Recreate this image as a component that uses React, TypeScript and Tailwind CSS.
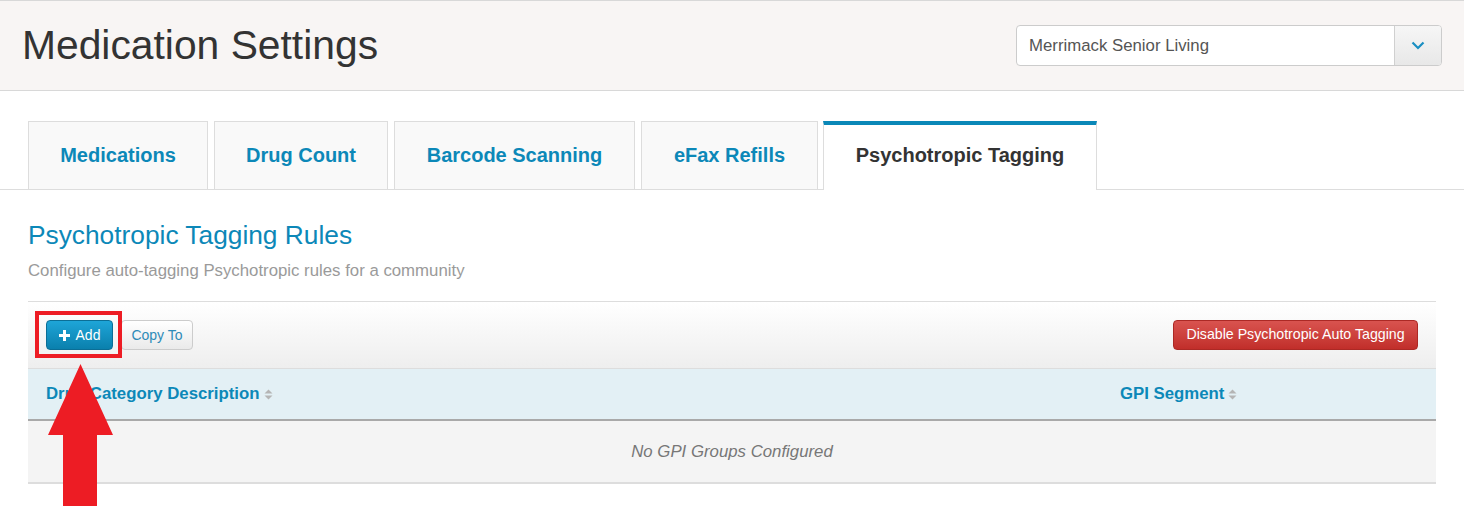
import React from "react";

const SortIcon = () => (
  <svg width="9" height="11" viewBox="0 0 9 11" className="ml-[4px] inline-block">
    <path d="M4.5 0.5 L8.5 4.5 L0.5 4.5 Z" fill="#b5b5b5" />
    <path d="M4.5 10.5 L8.5 6.5 L0.5 6.5 Z" fill="#b5b5b5" />
  </svg>
);

const tabs = [
  { label: "Medications", w: "w-[180px] mr-[6px]" },
  { label: "Drug Count", w: "w-[174px] mr-[6px]" },
  { label: "Barcode Scanning", w: "w-[241px] mr-[6px]" },
  { label: "eFax Refills", w: "w-[177px] mr-[5px]" },
];

export default function App() {
  return (
    <div className="relative w-[1464px] h-[515px] bg-white font-['Liberation_Sans',Arial,sans-serif] overflow-hidden">
      {/* Header */}
      <div className="h-[91px] border-y border-[#d8d8d8] bg-[#f8f5f4] flex items-center justify-between pl-[22px] pr-[22px]">
        <h1 className="text-[40.8px] leading-none text-[#333333] font-normal">Medication Settings</h1>
        <div className="w-[426px] h-[41px] flex border border-[#cccccc] rounded-[4px] bg-white overflow-hidden">
          <div className="flex-1 flex items-center pl-[12px] text-[16.8px] text-[#555555]">Merrimack Senior Living</div>
          <div className="w-[47px] border-l border-[#d0d0d0] bg-linear-to-b from-[#f6f6f6] to-[#e8e8e8] flex items-center justify-center">
            <svg width="14" height="9" viewBox="0 0 14 9">
              <path d="M1.5 1.5 L7 7 L12.5 1.5" fill="none" stroke="#1a8fc2" strokeWidth="2.2" />
            </svg>
          </div>
        </div>
      </div>

      {/* Tabs */}
      <div className="pt-[30px]">
        <div className="flex items-end border-b border-[#dddddd] pl-[28px] h-[69px]">
          {tabs.map((t) => (
            <div
              key={t.label}
              className={`${t.w} h-[68px] border-t border-x border-[#dddddd] bg-[#f9f9f9] flex items-center justify-center text-[20px] font-bold text-[#0c88b8] pb-[2px]`}
            >
              {t.label}
            </div>
          ))}
          <div className="w-[274px] h-[69px] -mb-px border-t-4 border-t-[#0a88b8] border-x border-x-[#dddddd] bg-white flex items-center justify-center text-[20px] font-bold text-[#333333] pb-[5px]">
            Psychotropic Tagging
          </div>
        </div>
      </div>

      {/* Section */}
      <div className="px-[28px] pt-[30px]">
        <h2 className="text-[26.3px] leading-[30px] text-[#0c88b8] font-normal">Psychotropic Tagging Rules</h2>
        <p className="mt-[11px] text-[16.8px] leading-[20px] text-[#9a9a9a]">
          Configure auto-tagging Psychotropic rules for a community
        </p>

        {/* Toolbar */}
        <div className="mt-[20px] border-t border-[#dddddd] h-[67px] bg-linear-to-b from-white to-[#eeeeee] flex items-start justify-between pt-[18px] pl-[18px] pr-[18px]">
          <div className="flex gap-[8px]">
            <button className="w-[67px] h-[30px] rounded-[4px] border border-[#0b6e96] bg-linear-to-b from-[#1ea5d8] to-[#0a80ad] text-white text-[14px] flex items-center justify-center gap-[6px]">
              <svg width="11" height="11" viewBox="0 0 11 11">
                <path d="M4 0 H7 V4 H11 V7 H7 V11 H4 V7 H0 V4 H4 Z" fill="white" />
              </svg>
              <span>Add</span>
            </button>
            <button className="w-[72px] h-[30px] rounded-[4px] border border-[#cccccc] bg-linear-to-b from-white to-[#eaeaea] text-[#2e8bb8] text-[14px] flex items-center justify-center">
              Copy To
            </button>
          </div>
          <button className="w-[245px] h-[30px] rounded-[4px] border border-[#ac2925] bg-linear-to-b from-[#d9534f] to-[#c12e2a] text-white text-[14.2px] flex items-center justify-center">
            Disable Psychotropic Auto Tagging
          </button>
        </div>

        {/* Table */}
        <div className="border-t border-[#dddddd]">
          <div className="grid grid-cols-[1074px_1fr] h-[52px] bg-[#e3f0f5] border-b-2 border-[#a9a9a9] items-center text-[16.8px] font-bold text-[#0c88b8]">
            <div className="pl-[18px] flex items-center">
              Drug Category Description
              <SortIcon />
            </div>
            <div className="pl-[18px] flex items-center">
              GPI Segment
              <SortIcon />
            </div>
          </div>
          <div className="h-[63px] bg-[#f4f4f4] border-b-2 border-[#dddddd] flex items-center justify-center text-[16.8px] italic text-[#777777]">
            No GPI Groups Configured
          </div>
        </div>
      </div>

      {/* Annotation overlays */}
      <div className="absolute left-[35px] top-[311px] w-[87px] h-[47px] border-4 border-[#ed1c24] pointer-events-none" />
      <svg className="absolute left-[48px] top-[364px] pointer-events-none" width="65" height="142" viewBox="0 0 65 142">
        <polygon points="32.5,0 65,71 49,71 49,142 15,142 15,71 0,71" fill="#ed1c24" />
      </svg>
    </div>
  );
}
